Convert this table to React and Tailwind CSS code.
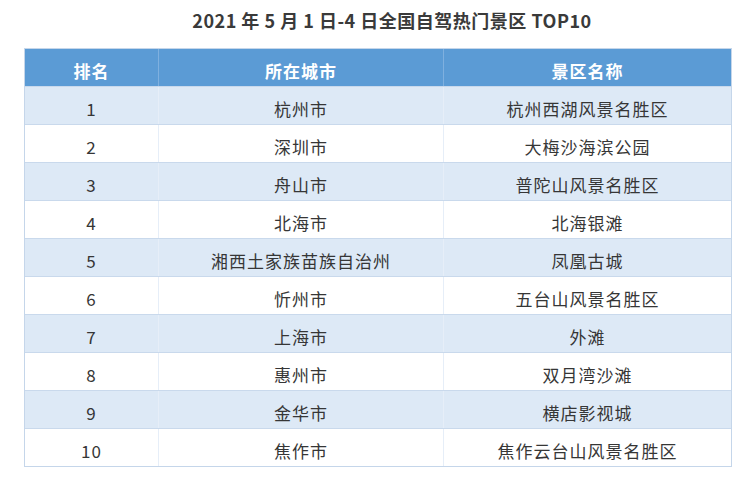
const ROWS = [
  ['1', '杭州市', '杭州西湖风景名胜区'],
  ['2', '深圳市', '大梅沙海滨公园'],
  ['3', '舟山市', '普陀山风景名胜区'],
  ['4', '北海市', '北海银滩'],
  ['5', '湘西土家族苗族自治州', '凤凰古城'],
  ['6', '忻州市', '五台山风景名胜区'],
  ['7', '上海市', '外滩'],
  ['8', '惠州市', '双月湾沙滩'],
  ['9', '金华市', '横店影视城'],
  ['10', '焦作市', '焦作云台山风景名胜区'],
]

export default function App() {
  return (
    <div
      className="w-[750px] h-[486px] bg-white text-[#333] flex flex-col"
      style={{ fontFamily: '"Noto Sans CJK SC", "Noto Sans", sans-serif' }}
    >
      <h1 className="h-[40px] flex items-center justify-center text-[18px] tracking-[0.5px] font-bold text-[#3a3a3a] pl-[34px] pt-[1px]">
        2021 年 5 月 1 日-4 日全国自驾热门景区 TOP10
      </h1>
      <div className="mt-[8px] ml-[24px] w-[708px] border border-[#c5d6ea]">
        <div className="grid grid-cols-[134px_285px_1fr] h-[37px] bg-[#5b9bd5] text-white font-bold text-[17px] tracking-[1px]">
          <div className="flex items-center justify-center pt-[7px] border-r border-[#7fb0df]">排名</div>
          <div className="flex items-center justify-center pt-[7px] border-r border-[#7fb0df]">所在城市</div>
          <div className="flex items-center justify-center pt-[7px]">景区名称</div>
        </div>
        {ROWS.map((r, i) => (
          <div
            key={r[0]}
            className={
              'grid grid-cols-[134px_285px_1fr] h-[38px] text-[17px] text-[#363636] border-t border-[#c9d9ec] ' +
              (i % 2 === 0 ? 'bg-[#dde9f6]' : 'bg-white')
            }
          >
            <div className="flex items-center justify-center pt-[7px] border-r border-[#e6eef8] tracking-[1px]">{r[0]}</div>
            <div className="flex items-center justify-center pt-[7px] border-r border-[#e6eef8] tracking-[1px]">{r[1]}</div>
            <div className="flex items-center justify-center pt-[7px] tracking-[1px]">{r[2]}</div>
          </div>
        ))}
      </div>
    </div>
  )
}
